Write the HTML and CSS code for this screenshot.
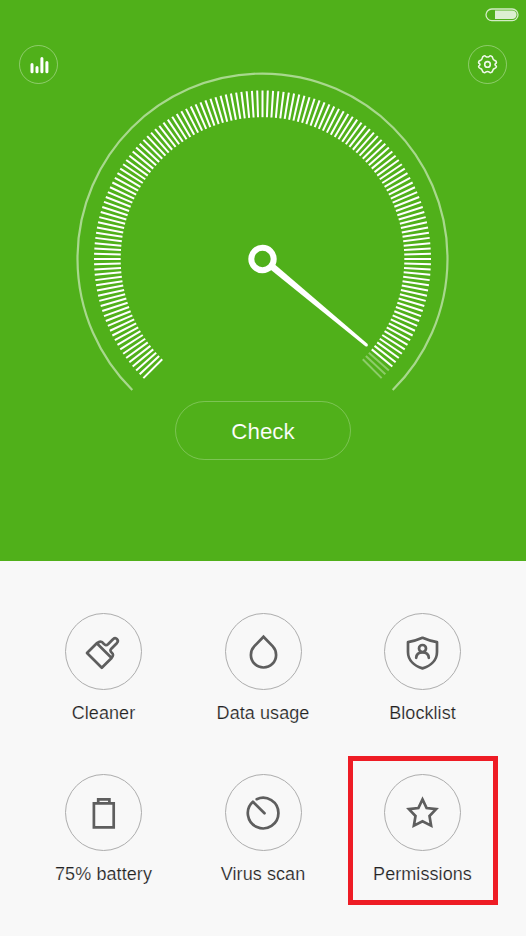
FILE: index.html
```html
<!DOCTYPE html>
<html lang="en">
<head>
<meta charset="utf-8">
<title>Security</title>
<link rel="stylesheet" href="styles.css">
</head>
<body>
<main class="app">
  <section class="hero">
    <div class="status">
      <svg class="power" width="34" height="14" viewBox="0 0 34 14">
        <rect class="power-shell" x="1" y="1" width="32" height="11.6" rx="5.8"/>
        <path class="power-level" d="M10 2.6H27.4A4.2 4.2 0 0 1 27.4 11H10Z"/>
      </svg>
    </div>
    <div class="toolbar">
      <button class="round" aria-label="Statistics">
        <svg width="37" height="37" viewBox="0.9 0.9 37 37"><path class="bars" d="M12.9 19.5v7.1M17.9 22.5v4.1M22.8 13.3v13.3M27.8 17.3v9.3"/></svg>
      </button>
      <button class="round" aria-label="Settings">
        <svg width="37" height="37" viewBox="0.5 0.7 37 37"><g class="gear"><path d="M15.5 10.6Q16.4 10.3 17.1 11Q19 12.5 20.9 11Q21.6 10.3 22.5 10.6Q24.1 11.2 24.2 12.7Q24.5 14.8 26.5 15.3Q28 15.8 27.9 17.2Q27.8 17.8 27 18.3Q26 19.1 27 20Q27.9 20.6 27.9 21.2Q27.8 22.5 26.5 22.9Q24.6 23.4 24.2 25.4Q24 26.9 22.5 27.3Q21.6 27.6 20.9 26.9Q19 25.5 17.1 26.9Q16.4 27.6 15.5 27.3Q14 26.9 13.8 25.4Q13.4 23.4 11.5 22.9Q10.2 22.5 10.1 21.2Q10.1 20.6 11 20Q12 19.1 11 18.3Q10.2 17.8 10.1 17.2Q10 15.8 11.5 15.3Q13.5 14.8 13.8 12.7Q13.9 11.2 15.5 10.6Z"/><circle cx="19" cy="19.1" r="2.8"/></g></svg>
      </button>
    </div>
    <svg class="gauge" width="376" height="322" viewBox="74 71 376 322">
      <path class="track" d="M132.3 390A185 185 0 1 1 392.7 390"/>
      <g id="ticks" class="ticks"></g>
      <path class="needle" d="M270.7 269.8L274.9 264.4L367.4 343.8Q368.4 345 367.6 346Q366.7 347 365.4 346.3Z"/>
      <circle class="hub" cx="262.5" cy="259" r="11.2"/>
    </svg>
    <button class="check">Check</button>
  </section>
  <section class="tools">
    <div class="tool">
      <span class="disc"><svg width="75" height="75" viewBox="0.2 0.8 75 75"><path d="M31 30L21.2 39.8L36 54.6L45.8 44.8Z M31 30L33.8 28.5Q36.3 28 37.8 30.5Q40 33 42.2 31L47.2 26Q49.5 24 51.3 26Q53 27.8 51 30L45.5 35.5Q43.5 37.5 46 39.5Q48.5 41.5 45.8 44.8"/></svg></span>
      <span class="label">Cleaner</span>
    </div>
    <div class="tool">
      <span class="disc"><svg class="mitred" width="75" height="75" viewBox="0.5 0.5 75 75"><path d="M38 23.3L28.7 32.9C25.7 36.2 25.4 39 25.4 41.4A12.6 12.6 0 0 0 50.6 41.4C50.6 39 50.3 36.2 47.3 32.9Z"/></svg></span>
      <span class="label">Data usage</span>
    </div>
    <div class="tool">
      <span class="disc"><svg width="75" height="75" viewBox="0.5 0.5 75 75"><path d="M38 24.3Q45 27.4 52.5 28.6V38.5C52.5 46.8 46 52.5 38 54.9C30 52.5 23.5 46.8 23.5 38.5V28.6Q31 27.4 38 24.3Z"/><circle cx="38" cy="35" r="3.5"/><path d="M31.7 44.3Q32 38.8 38 38.8T44.3 44.3"/></svg></span>
      <span class="label">Blocklist</span>
    </div>
    <div class="tool">
      <span class="disc"><svg class="mitred" width="75" height="75" viewBox="0.5 0.8 75 75"><path d="M28.4 29.1H48.2V53.2H28.4ZM32.7 29.1V25.2H43.9V29.1"/></svg></span>
      <span class="label">75% battery</span>
    </div>
    <div class="tool">
      <span class="disc"><svg width="75" height="75" viewBox="0.5 0.8 75 75"><path d="M39 39L27.4 27.5A15.3 15.3 0 1 0 31.2 25"/></svg></span>
      <span class="label">Virus scan</span>
    </div>
    <div class="tool selected">
      <span class="disc"><svg class="mitred" width="75" height="75" viewBox="0.5 0.8 75 75"><path d="M38 25.2L42.1 33.8L51.6 34.9L45 41.8L46.6 51.4L38 47L29.4 51.4L31 41.8L24.4 34.9L33.9 33.8Z"/></svg></span>
      <span class="label">Permissions</span>
    </div>
  </section>
</main>
<script src="gauge.js"></script>
</body>
</html>
```
FILE: styles.css
```css
* { box-sizing: border-box; }
body {
  margin: 0;
  font-family: "Liberation Sans", Arial, sans-serif;
  background: #f8f8f8;
}
.app { width: 526px; height: 936px; overflow: hidden; }
svg { display: block; fill: none; }
button {
  padding: 0;
  background: none;
  color: #fff;
  font: inherit;
}
.hero {
  height: 561px;
  display: flex;
  flex-direction: column;
  align-items: center;
  background: #50b01a;
}
.status {
  align-self: stretch;
  display: flex;
  justify-content: flex-end;
  padding: 8px 7px 0 0;
  height: 45px;
}
.power-shell { stroke: #d3ebc5; stroke-width: 1.3; }
.power-level { fill: #dcefd1; }
.toolbar {
  align-self: stretch;
  display: flex;
  justify-content: space-between;
  padding: 0 19px;
  height: 26px;
}
.round {
  width: 39px;
  height: 39px;
  border: 1px solid rgba(255, 255, 255, .35);
  border-radius: 50%;
}
.bars { stroke: #fff; stroke-width: 3; stroke-linecap: round; }
.gear { stroke: #eff8ea; stroke-width: 1.6; stroke-linejoin: round; }
.gauge { flex: none; margin-right: 2px; }
.track { stroke: rgba(255, 255, 255, .5); stroke-width: 2.2; }
.ticks { stroke: #fff; stroke-width: 2; }
.ticks .idle { opacity: .35; }
.needle { fill: #fff; }
.hub { stroke: #fff; stroke-width: 6; }
.check {
  flex: none;
  width: 176px;
  height: 59px;
  margin-top: 8px;
  padding-top: 2px;
  border: 1px solid rgba(255, 255, 255, .25);
  border-radius: 30px;
  font-size: 22.4px;
  line-height: 55px;
  -webkit-text-stroke: .15px #50b01a;
}
.tools {
  display: grid;
  grid-template-columns: repeat(3, 150px);
  grid-template-rows: repeat(2, 149px);
  column-gap: 9.5px;
  row-gap: 12px;
  padding: 34px 0 0 28.5px;
}
.tool {
  display: flex;
  flex-direction: column;
  align-items: center;
  border: 5px solid transparent;
  padding-top: 13px;
}
.selected { border-color: #ee1c25; }
.disc {
  width: 77px;
  height: 77px;
  border: 1px solid #adadad;
  border-radius: 50%;
}
.disc svg { stroke: #5e5e5e; stroke-width: 2.7; stroke-linejoin: round; stroke-linecap: round; }
.disc .mitred { stroke-linejoin: miter; }
.label {
  margin-top: 12px;
  color: #222;
  font-size: 18px;
  line-height: 22px;
  letter-spacing: .08px;
  white-space: nowrap;
  -webkit-text-stroke: .2px #f8f8f8;
}
```
FILE: gauge.js
```js
// 151 marks, 1.8 degrees apart, clockwise from the lower left.
const ticks = document.getElementById("ticks");
const cx = 262.5, cy = 259, inner = 141.8, outer = 168.5;
for (let i = 0; i <= 150; i++) {
  const a = (135 + i * 1.8) * Math.PI / 180;
  const line = document.createElementNS("http://www.w3.org/2000/svg", "line");
  line.setAttribute("x1", cx + inner * Math.cos(a));
  line.setAttribute("y1", cy + inner * Math.sin(a));
  line.setAttribute("x2", cx + outer * Math.cos(a));
  line.setAttribute("y2", cy + outer * Math.sin(a));
  if (i > 147) line.setAttribute("class", "idle");
  ticks.appendChild(line);
}
```
